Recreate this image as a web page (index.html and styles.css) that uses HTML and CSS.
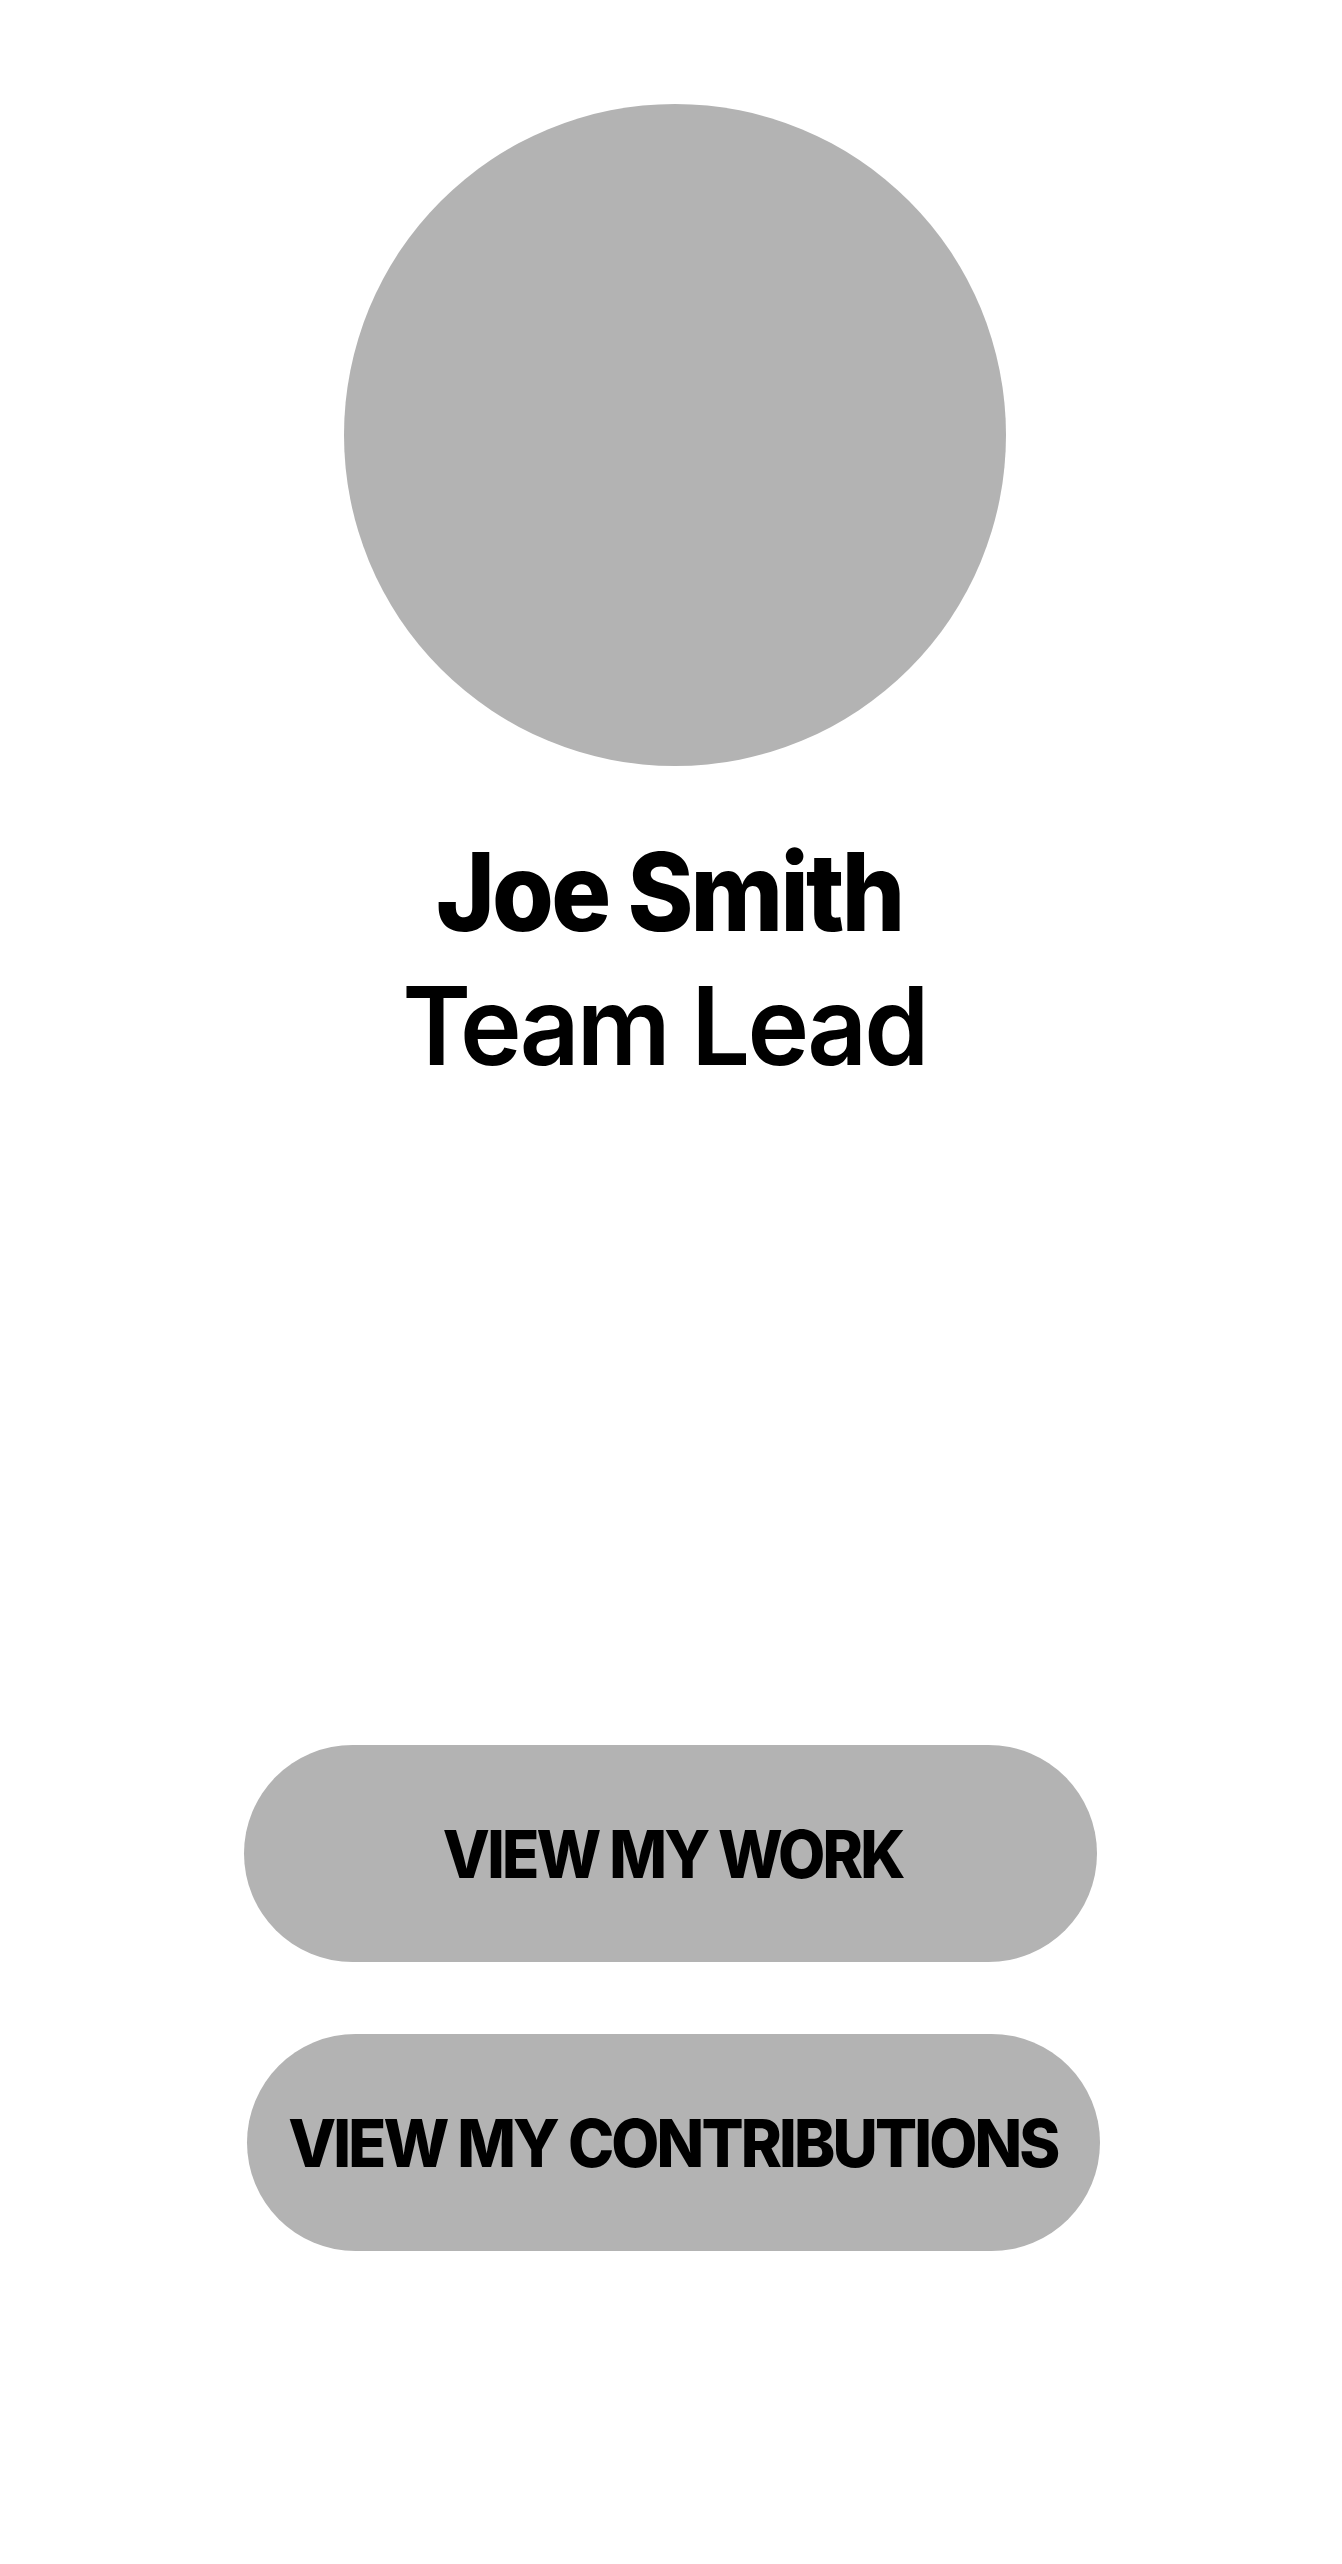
FILE: index.html
```html
<!DOCTYPE html>
<html lang="en">
<head>
<meta charset="utf-8">
<title>Joe Smith</title>
<link rel="stylesheet" href="styles.css">
</head>
<body>
<main class="profile">
  <div class="avatar"></div>
  <div class="identity">
    <h1 class="name"><span class="squeeze">Joe Smith</span></h1>
    <p class="role"><span class="squeeze">Team Lead</span></p>
  </div>
  <div class="actions">
    <a class="btn btn-work" href="#"><span class="squeeze">VIEW MY WORK</span></a>
    <a class="btn btn-contrib" href="#"><span class="squeeze">VIEW MY CONTRIBUTIONS</span></a>
  </div>
</main>
</body>
</html>
```
FILE: styles.css
```css
html, body {
  margin: 0;
  padding: 0;
  background: #ffffff;
}
body {
  font-family: Inter, "Liberation Sans", sans-serif;
  color: #000;
}
.profile {
  width: 1342px;
  display: flex;
  flex-direction: column;
  align-items: center;
  padding-top: 104px;
}
.avatar {
  width: 662px;
  height: 662px;
  border-radius: 50%;
  background: #b3b3b3;
  margin-left: 8px;
}
.identity {
  margin-top: 59px;
  text-align: center;
}
.squeeze {
  display: inline-block;
  white-space: nowrap;
}
.name {
  margin: 0;
  padding-right: 3px;
  font-size: 108px;
  line-height: 134px;
  font-weight: 800;
  letter-spacing: -3px;
}
.name .squeeze { transform: scaleX(0.925); }
.role {
  margin: 0;
  padding-right: 14px;
  font-size: 108px;
  line-height: 134px;
  font-weight: 600;
  letter-spacing: -3px;
}
.role .squeeze { transform: scaleX(0.966); }
.actions {
  margin-top: 652px;
  display: flex;
  flex-direction: column;
  align-items: center;
  gap: 72px;
}
.btn {
  width: 853px;
  height: 217px;
  border-radius: 109px;
  background: #b3b3b3;
  color: #000;
  text-decoration: none;
  font-size: 66px;
  font-weight: 800;
  letter-spacing: -3px;
  display: flex;
  align-items: center;
  justify-content: center;
  box-sizing: border-box;
}
.btn .squeeze { transform: scaleX(0.943); }
.btn-work { margin-left: -2px; padding-left: 5px; }
.btn-work .squeeze { transform: scaleX(0.928); }
.btn-contrib { margin-left: 5px; padding-right: 2px; }
```
